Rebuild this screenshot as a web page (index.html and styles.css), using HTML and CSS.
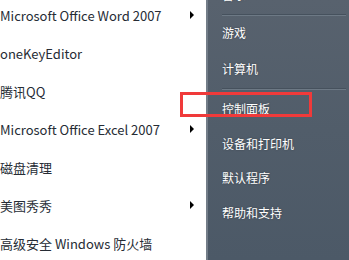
FILE: index.html
```html
<!DOCTYPE html>
<html lang="zh">
<head>
<meta charset="utf-8">
<link rel="stylesheet" href="styles.css">
</head>
<body>
<div class="menu">
  <ul class="programs">
    <li class="prog"><span>Microsoft Office Word 2007</span><i class="arrow"></i></li>
    <li class="prog"><span>oneKeyEditor</span></li>
    <li class="prog"><span>腾讯QQ</span></li>
    <li class="prog"><span>Microsoft Office Excel 2007</span><i class="arrow"></i></li>
    <li class="prog"><span>磁盘清理</span></li>
    <li class="prog"><span>美图秀秀</span><i class="arrow"></i></li>
    <li class="prog"><span>高级安全 Windows 防火墙</span></li>
  </ul>
  <div class="places">
    <ul class="links">
      <li class="link">音乐</li>
      <li class="sep"></li>
      <li class="link">游戏</li>
      <li class="link">计算机</li>
      <li class="sep lower"></li>
      <li class="link">控制面板</li>
      <li class="link compact">设备和打印机</li>
      <li class="link compact">默认程序</li>
      <li class="link compact">帮助和支持</li>
    </ul>
  </div>
  <div class="highlight"></div>
</div>
</body>
</html>
```
FILE: styles.css
```css
* { box-sizing: border-box; }
html, body { margin: 0; padding: 0; }
body {
  width: 349px;
  height: 260px;
  overflow: hidden;
  background: #ffffff;
  font-family: "Noto Sans CJK SC", "Noto Sans", sans-serif;
}
ul { list-style: none; margin: 0; padding: 0; }

.menu {
  position: relative;
  display: flex;
  width: 349px;
  height: 260px;
}

.programs {
  width: 206px;
  flex: none;
  margin-top: -4px;
  background: #ffffff;
}
.prog {
  height: 38px;
  display: flex;
  align-items: center;
  justify-content: space-between;
  padding: 0 12px 0 0;
  font-size: 13px;
  color: #262c35;
  white-space: nowrap;
}
.arrow {
  width: 0;
  height: 0;
  border-top: 4px solid transparent;
  border-bottom: 4px solid transparent;
  border-left: 4px solid #000;
}

.places {
  flex: 1;
  border-left: 2px solid #737d88;
  background: linear-gradient(180deg, #58626e 0%, #515d6a 50%, #4c5967 100%);
  overflow: hidden;
}
.links {
  margin-top: -22px;
}
.link {
  height: 36px;
  display: flex;
  align-items: center;
  padding: 0 0 4px 14px;
  font-size: 12px;
  color: #ffffff;
  text-shadow: 0 0 2px rgba(0, 0, 0, 0.35);
}
.link.compact {
  height: 34.5px;
}
.sep {
  height: 2px;
  margin: 0 3px 0 14px;
  border-top: 1px solid #46515d;
  border-bottom: 1px solid #6d7985;
}
.sep.lower {
  margin-bottom: 2px;
}

.highlight {
  position: absolute;
  left: 180px;
  top: 92px;
  width: 132px;
  height: 25px;
  border: 3px solid #f03a3a;
}
```
